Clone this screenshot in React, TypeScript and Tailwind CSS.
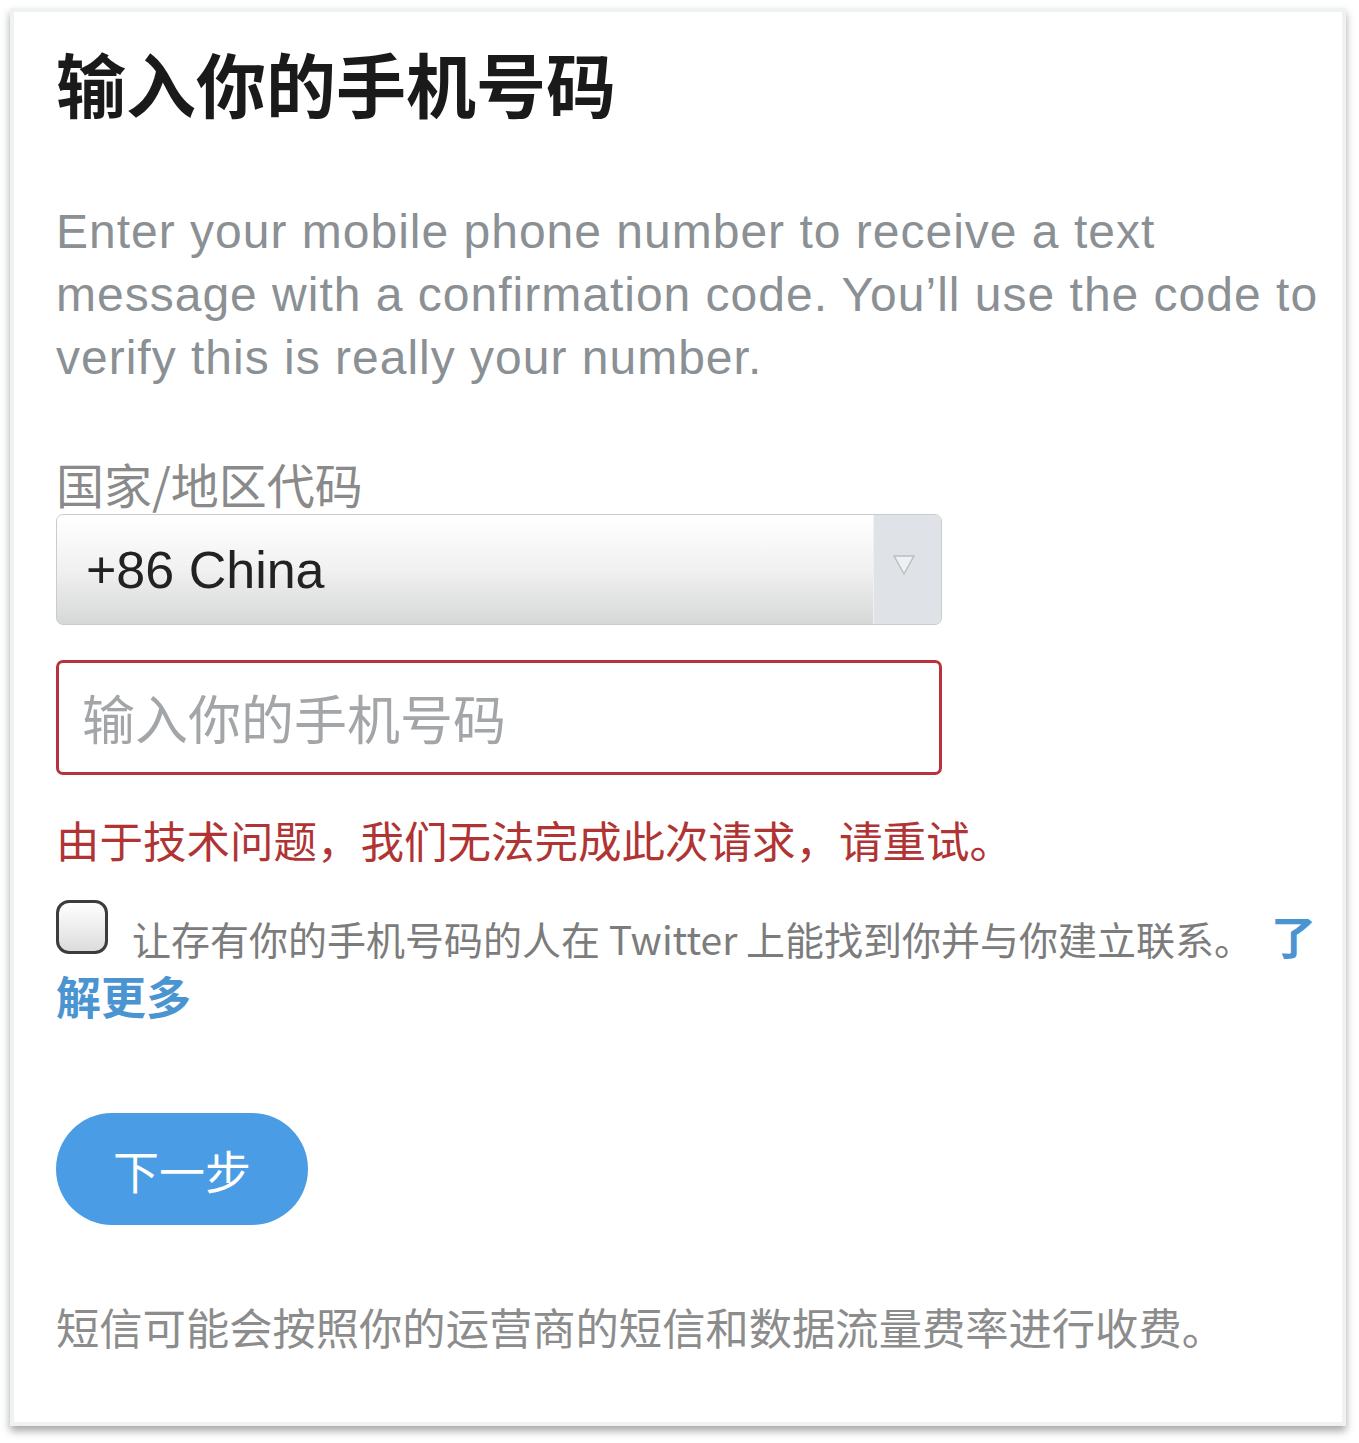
export default function App() {
  const cjk = { fontFamily: '"Noto Sans CJK SC", "Noto Sans", sans-serif' };
  const latin = {
    fontFamily: '"Liberation Sans", "Noto Sans CJK SC", Arial, sans-serif',
  };

  return (
    <div className="min-h-[1443px] w-[1359px] bg-white pl-[10px] pt-[8px]">
      <div className="h-[1418px] w-[1336px] border-4 border-[#eef2f2] bg-white pl-[42px] pt-[31px] shadow-[0_5px_8px_rgba(0,0,0,0.35)]">
        <h1
          className="text-[70px] font-bold leading-[80px] text-[#1a1a1a]"
          style={cjk}
        >
          输入你的手机号码
        </h1>

        <p
          className="mt-[77px] whitespace-nowrap text-[48px] leading-[63px] tracking-[1px] text-[#8b9094]"
          style={latin}
        >
          Enter your mobile phone number to receive a text
          <br />
          message with a confirmation code. You’ll use the code to
          <br />
          verify this is really your number.
        </p>

        <div
          className="mt-[66px] text-[48px] leading-[56px] text-[#8a8a8a]"
          style={cjk}
        >
          国家/地区代码
        </div>

        <div className="mt-[3px] flex h-[111px] w-[886px] overflow-hidden rounded-[7px] border border-[#c9cccf] bg-gradient-to-b from-[#ffffff] via-[#f1f1f1] to-[#d6d7d7]">
          <div
            className="flex flex-1 items-center pl-[29px] text-[52px] text-[#222]"
            style={latin}
          >
            +86 China
          </div>
          <div className="flex w-[68px] items-center justify-center border-l border-[#eef0f2] bg-[#dfe3e7]">
            <svg
              width="24"
              height="22"
              viewBox="0 0 24 22"
              className="-mt-[10px] -ml-[8px]"
            >
              <path
                d="M2 2 L22 2 L12 20 Z"
                fill="#eef0f2"
                stroke="#b9bec3"
                strokeWidth="1.5"
                strokeLinejoin="round"
              />
            </svg>
          </div>
        </div>

        <div className="mt-[35px] flex h-[115px] w-[886px] items-center rounded-[7px] border-[3px] border-[#b8323c] bg-white pl-[23px]">
          <span className="text-[53px] text-[#a3a6a8]" style={cjk}>
            输入你的手机号码
          </span>
        </div>

        <div
          className="mt-[37px] text-[43.5px] leading-[56px] text-[#b03434]"
          style={cjk}
        >
          由于技术问题，我们无法完成此次请求，请重试。
        </div>

        <p className="mt-[32px] leading-[48px]" style={cjk}>
          <span className="mr-[24px] inline-block h-[54px] w-[52px] rounded-[13px] border-[3px] border-[#3c3c3c] bg-gradient-to-b from-[#ffffff] to-[#dcdcdc] align-[1px]" />
          <span className="text-[39px] text-[#7c7c7c]">
            让存有你的手机号码的人在 Twitter 上能找到你并与你建立联系。
          </span>
          <a className="ml-[18px] text-[45px] font-bold text-[#4b94d2]">
            <span>了</span>
            <span>解更多</span>
          </a>
        </p>

        <button
          className="mt-[81px] flex h-[112px] w-[252px] items-center justify-center rounded-full bg-[#4a9de4] text-[46px] text-white"
          style={cjk}
        >
          下一步
        </button>

        <div
          className="mt-[73px] text-[43.3px] leading-[56px] text-[#8c8c8c]"
          style={cjk}
        >
          短信可能会按照你的运营商的短信和数据流量费率进行收费。
        </div>
      </div>
    </div>
  );
}
